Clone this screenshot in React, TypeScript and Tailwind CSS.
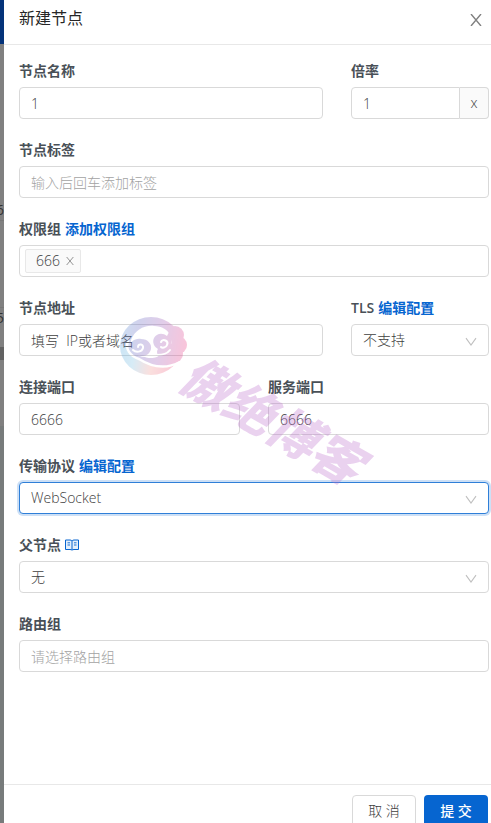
import type { ReactNode } from 'react';

const linkClass = 'font-bold text-[#0665d0]';
const controlClass =
  'block h-8 w-full min-w-0 appearance-none rounded border border-[#d9d9d9] bg-white px-[11px] text-sm font-light text-[#404040] outline-none placeholder:text-[#a3a3a3]';

function Field({ id, label, extra, className = '', children }: {
  id: string;
  label: string;
  extra?: ReactNode;
  className?: string;
  children: ReactNode;
}) {
  return (
    <div className={className}>
      <div className="mb-1.5 flex h-5 items-center gap-1 text-sm leading-5">
        <label htmlFor={id} className="font-semibold text-[#495057]">{label}</label>
        {extra}
      </div>
      {children}
    </div>
  );
}

function SelectBox({ id, options, focused = false }: { id: string; options: string[]; focused?: boolean }) {
  return (
    <div className="relative">
      <select
        id={id}
        className={
          focused
            ? `${controlClass} border-[#2f7fd8]! shadow-[0_0_0_2px_rgba(6,101,208,0.2)]`
            : controlClass
        }
      >
        {options.map((o) => <option key={o}>{o}</option>)}
      </select>
      <svg className="pointer-events-none absolute top-3 right-3 size-3" viewBox="0 0 12 12" fill="none" stroke="#bfbfbf" strokeWidth="1.1" aria-hidden="true">
        <path d="M1 2.2 6 9l5-6.8" />
      </svg>
    </div>
  );
}

function Cross({ className }: { className: string }) {
  return (
    <svg className={className} viewBox="0 0 12 12" fill="none" stroke="currentColor" strokeWidth="1.4" aria-hidden="true">
      <path d="M1 0 11 12M11 0 1 12" />
    </svg>
  );
}

function BookIcon() {
  return (
    <svg className="h-3 w-3.5" viewBox="0 0 14 12" fill="none" stroke="#0665d0" aria-hidden="true">
      <path fill="#e3effb" d="M.5 1H5q1.500 0 2 1 .5-1 2-1h4.500v9.500H9q-1.500 0-2 .8-.5-.8-2-.8H.5zM7 2v9" />
      <path d="M2.500 3.800H5M2.500 6H5M9 3.800h2.500M9 6h2.500" strokeWidth=".9" />
    </svg>
  );
}

function Watermark() {
  return (
    <div className="pointer-events-none absolute inset-0 overflow-hidden opacity-30" aria-hidden="true">
      <svg className="absolute top-[310px] left-[114px] h-[72px] w-[80px]" viewBox="0 0 80 72">
        <defs>
          <linearGradient id="upper" gradientUnits="userSpaceOnUse" x1="5" y1="30" x2="72" y2="42">
            <stop offset="0" stopColor="#5a98d8" />
            <stop offset=".25" stopColor="#6a6cc4" />
            <stop offset=".6" stopColor="#a05cb8" />
            <stop offset="1" stopColor="#ee3f86" />
          </linearGradient>
          <linearGradient id="lower" gradientUnits="userSpaceOnUse" x1="5" y1="40" x2="66" y2="50">
            <stop offset="0" stopColor="#55a8e0" />
            <stop offset=".25" stopColor="#7cc0e2" />
            <stop offset=".55" stopColor="#f09a94" />
            <stop offset="1" stopColor="#f03f78" />
          </linearGradient>
          {/* White keeps the cloud shape, black cuts the gaps between its swirls */}
          <mask id="cloud" maskUnits="userSpaceOnUse" x="0" y="0" width="80" height="72">
            <ellipse cx="37" cy="36" rx="31" ry="29" fill="#fff" />
            <circle cx="61" cy="25" r="9" fill="#fff" />
            <circle cx="64" cy="35" r="9" fill="#fff" />
            <circle cx="60" cy="44" r="9" fill="#fff" />
            <path fill="#000" d="M17 30c4-10 13-15 23-14 8 0 14 4 16 9 3 4 2 10-2 14l-8 7c-5 2-11 3-15 1-8 0-15-7-14-17z" />
            <path fill="none" stroke="#000" strokeWidth="2.500" strokeLinecap="round" d="M14 31c-3 8 2 15 11 18 11 7 26 11 41 3" />
            <path fill="#fff" d="M15 39c0-7 6-11 12-10 7 0 11 5 10 10-1 4-4 7-8 7-6 0-10-2-14-7z" />
            <path fill="#fff" d="M56 20c4 9 2 14-3 19 2 5-1 9-6 8-4-2-5-5-3-8-4-2-6-7-4-11 2-4 8-6 13-2z" />
            <path fill="#fff" d="M47 40c3 0 7-2 9-7l8 6-4 10c-7 2-14 0-18-4 2 0 4-2 5-5z" />
            <path fill="none" stroke="#000" strokeWidth="2" strokeLinecap="round" d="M24 37c0-4 6-3 5 1-1 4-7 5-10 2M47 32c2-4 8-1 6 3-1 3-5 3-6 2M43 45c5 0 10-1 13-5" />
          </mask>
        </defs>
        <g mask="url(#cloud)">
          <path fill="url(#upper)" d="M0 0h80v72H0z" />
          <path fill="url(#lower)" d="M0 36h13c0 7 5 10 12 13 11 7 26 11 41 3l14-6v26H0z" />
        </g>
      </svg>
      <p className="absolute top-[384px] left-[172px] rotate-30 text-[50px] leading-[72px] font-black whitespace-nowrap text-[#bb6ccb] italic">傲绝博客</p>
    </div>
  );
}

export default function App() {
  return (
    <div className="relative flex h-screen overflow-hidden bg-[#808080] font-['Open_Sans','Noto_Sans_CJK_SC',sans-serif] text-sm">
      <div className="flex w-1 shrink-0 flex-col overflow-hidden text-[#333]">
        <div className="h-11 bg-[#04337a]" />
        <div className="h-[156px]" />
        <span className="flex h-5 justify-end leading-5">6</span>
        <div className="h-[88px] border-y border-[#777]" />
        <span className="flex h-5 justify-end leading-5">5</span>
        <div className="h-[19px]" />
        <div className="h-[13px] bg-[#626262]" />
        <div className="h-[66px]" />
        <div className="flex-1 bg-[#777b7b]" />
      </div>

      <section className="relative flex min-w-0 flex-1 flex-col bg-white">
        <header className="flex h-[45px] shrink-0 items-center justify-between border-b border-[#e8e8e8] pr-[9px] pb-2 pl-[15px]">
          <h1 className="text-base leading-6 font-normal text-[#262626]">新建节点</h1>
          <button type="button" aria-label="关闭" className="pt-1 text-[#808080]"><Cross className="size-3" /></button>
        </header>

        <form className="grid flex-1 grid-cols-12 content-start gap-x-7 gap-y-[21px] pt-4 pr-0.5 pl-[15px]">
          <Field id="name" label="节点名称" className="col-span-8">
            <input id="name" className={controlClass} defaultValue="1" />
          </Field>
          <Field id="rate" label="倍率" className="col-span-4">
            <div className="flex">
              <input id="rate" className={`${controlClass} rounded-r-none`} defaultValue="1" />
              <span className="flex h-8 w-[29px] shrink-0 items-center justify-center rounded-r border border-l-0 border-[#d9d9d9] bg-[#fafafa] font-light text-[#404040]">x</span>
            </div>
          </Field>
          <Field id="tags" label="节点标签" className="col-span-12">
            <input id="tags" className={controlClass} placeholder="输入后回车添加标签" />
          </Field>
          <Field id="groups" label="权限组" className="col-span-12" extra={<a href="#group" className={linkClass}>添加权限组</a>}>
            <div className="flex h-8 items-center gap-1 rounded border border-[#d9d9d9] bg-white px-[5px]">
              <span className="flex h-6 items-center gap-1.5 rounded-xs border border-[#e8e8e8] bg-[#fafafa] pr-1.5 pl-2.5 font-light text-[#404040]">
                666
                <button type="button" aria-label="移除 666" className="text-[#8c8c8c]"><Cross className="size-2" /></button>
              </span>
              <input id="groups" className="h-6 min-w-0 flex-1 outline-none" />
            </div>
          </Field>
          <Field id="host" label="节点地址" className="col-span-8">
            <input id="host" className={controlClass} defaultValue="填写  IP或者域名" />
          </Field>
          <Field id="tls" label="TLS" className="col-span-4" extra={<a href="#tls" className={linkClass}>编辑配置</a>}>
            <SelectBox id="tls" options={['不支持', '支持']} />
          </Field>
          <Field id="port" label="连接端口" className="col-span-6">
            <input id="port" className={controlClass} defaultValue="6666" />
          </Field>
          <Field id="serverPort" label="服务端口" className="col-span-6">
            <input id="serverPort" className={controlClass} defaultValue="6666" />
          </Field>
          <Field id="network" label="传输协议" className="col-span-12" extra={<a href="#network" className={linkClass}>编辑配置</a>}>
            <SelectBox id="network" focused options={['WebSocket', 'TCP', 'gRPC']} />
          </Field>
          <Field id="parent" label="父节点" className="col-span-12" extra={<a href="#help" aria-label="帮助"><BookIcon /></a>}>
            <SelectBox id="parent" options={['无']} />
          </Field>
          <Field id="route" label="路由组" className="col-span-12">
            <input id="route" className={controlClass} placeholder="请选择路由组" />
          </Field>
        </form>

        <footer className="flex h-[39px] shrink-0 items-start justify-end gap-2 border-t border-[#e8e8e8] pt-2.5 pr-[3px]">
          <button type="button" className="h-8 w-16 shrink-0 rounded border border-[#d9d9d9] bg-white font-light text-[#404040]">取 消</button>
          <button type="submit" className="h-8 w-16 shrink-0 rounded bg-[#0665d0] font-medium text-white">提 交</button>
        </footer>
      </section>
      <Watermark />
    </div>
  );
}
